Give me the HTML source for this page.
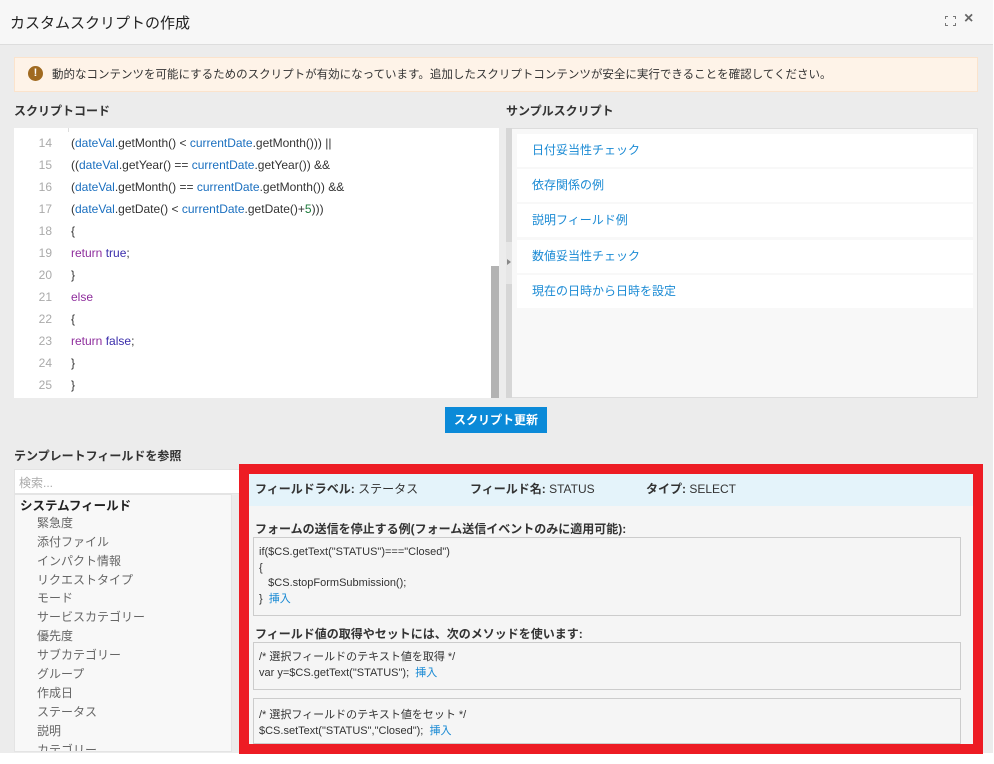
<!DOCTYPE html>
<html><head><meta charset="utf-8"><style>
*{box-sizing:border-box;margin:0;padding:0}
body{width:994px;height:764px;background:#fff;font-family:"Liberation Sans","Noto Sans CJK JP",sans-serif;position:relative;overflow:hidden;color:#333}
.a{position:absolute}
.hdr{left:0;top:0;width:993px;height:45px;background:#f7f7f7;border-bottom:1px solid #ddd}
.body{left:0;top:45px;width:993px;height:708px;background:#ececec}
.code div{position:absolute;left:0;font-size:12px;height:22px;line-height:22px;white-space:pre;color:#333}
.code .ln{color:#aaa;width:38px;text-align:right}
.b{color:#1a6fbf}.k{color:#8e2d9c}.t{color:#3a2dab}.n{color:#1b7a3a}
.item{position:absolute;left:517px;width:456px;height:33px;background:#fff;color:#1a8ad4;font-size:12px;line-height:33px;padding-left:15px}
.fld{position:absolute;left:36px;font-size:12px;color:#666}
.box{position:absolute;left:253px;width:708px;background:#f5f5f5;border:1px solid #ccc;font-size:11px;color:#333;line-height:15.5px;padding:7px 0 0 5px}
.ins{color:#1a8ad4}
.br{position:absolute;width:3px;height:3px;border-color:#777;border-style:solid;border-width:0}
</style></head><body>
<div class="a hdr"></div>
<div class="a" style="left:10px;top:12px;font-size:15px;color:#222">カスタムスクリプトの作成</div>
<div class="br" style="left:945px;top:16px;border-left-width:1.5px;border-top-width:1.5px"></div>
<div class="br" style="left:953px;top:16px;border-right-width:1.5px;border-top-width:1.5px"></div>
<div class="br" style="left:945px;top:23px;border-left-width:1.5px;border-bottom-width:1.5px"></div>
<div class="br" style="left:953px;top:23px;border-right-width:1.5px;border-bottom-width:1.5px"></div>
<div class="a" style="left:964px;top:10px;font-size:16px;color:#666;font-weight:bold">×</div>
<div class="a body"></div>
<div class="a" style="left:14px;top:57px;width:964px;height:35px;background:#fef3e8;border:1px solid #fbe3cc"></div>
<div class="a" style="left:28px;top:66px;width:15px;height:15px;border-radius:50%;background:#a06a20;color:#fff;font-size:11px;font-weight:bold;text-align:center;line-height:15px">!</div>
<div class="a" style="left:52px;top:66px;font-size:11.5px;color:#333">動的なコンテンツを可能にするためのスクリプトが有効になっています。追加したスクリプトコンテンツが安全に実行できることを確認してください。</div>
<div class="a" style="left:14px;top:102px;font-size:12px;font-weight:bold;color:#333">スクリプトコード</div>
<div class="a" style="left:506px;top:102px;font-size:12px;font-weight:bold;color:#333">サンプルスクリプト</div>
<div class="a code" style="left:14px;top:128px;width:485px;height:270px;background:#fff;overflow:hidden">
<div style="left:54px;top:0;width:1px;height:4px;background:#ddd"></div>
<div class="ln" style="top:4px">14</div><div style="left:57px;top:4px">(<span class="b">dateVal</span>.getMonth() &lt; <span class="b">currentDate</span>.getMonth())) ||</div>
<div class="ln" style="top:26px">15</div><div style="left:57px;top:26px">((<span class="b">dateVal</span>.getYear() == <span class="b">currentDate</span>.getYear()) &amp;&amp;</div>
<div class="ln" style="top:48px">16</div><div style="left:57px;top:48px">(<span class="b">dateVal</span>.getMonth() == <span class="b">currentDate</span>.getMonth()) &amp;&amp;</div>
<div class="ln" style="top:70px">17</div><div style="left:57px;top:70px">(<span class="b">dateVal</span>.getDate() &lt; <span class="b">currentDate</span>.getDate()+<span class="n">5</span>)))</div>
<div class="ln" style="top:92px">18</div><div style="left:57px;top:92px">{</div>
<div class="ln" style="top:114px">19</div><div style="left:57px;top:114px"><span class="k">return</span> <span class="t">true</span>;</div>
<div class="ln" style="top:136px">20</div><div style="left:57px;top:136px">}</div>
<div class="ln" style="top:158px">21</div><div style="left:57px;top:158px"><span class="k">else</span></div>
<div class="ln" style="top:180px">22</div><div style="left:57px;top:180px">{</div>
<div class="ln" style="top:202px">23</div><div style="left:57px;top:202px"><span class="k">return</span> <span class="t">false</span>;</div>
<div class="ln" style="top:224px">24</div><div style="left:57px;top:224px">}</div>
<div class="ln" style="top:246px">25</div><div style="left:57px;top:246px">}</div>
<div style="left:477px;top:138px;width:8px;height:132px;background:#b3b3b3"></div>
</div>
<div class="a" style="left:506px;top:128px;width:6px;height:270px;background:#d6d6d6"></div>
<div class="a" style="left:506px;top:242px;width:6px;height:42px;background:#e6e6e6"></div>
<div class="a" style="left:507px;top:259px;width:0;height:0;border-left:4px solid #888;border-top:3px solid transparent;border-bottom:3px solid transparent"></div>
<div class="a" style="left:512px;top:128px;width:466px;height:270px;background:#f8f8f8;border:1px solid #ddd;border-left:none"></div>
<div class="item" style="top:134px">日付妥当性チェック</div>
<div class="item" style="top:169px">依存関係の例</div>
<div class="item" style="top:204px">説明フィールド例</div>
<div class="item" style="top:240px">数値妥当性チェック</div>
<div class="item" style="top:275px">現在の日時から日時を設定</div>
<div class="a" style="left:445px;top:407px;width:102px;height:26px;background:#0b8ad8;color:#fff;font-size:12px;font-weight:bold;text-align:center;line-height:26px">スクリプト更新</div>
<div class="a" style="left:14px;top:447px;font-size:12px;font-weight:bold;color:#333">テンプレートフィールドを参照</div>
<div class="a" style="left:14px;top:469px;width:226px;height:25px;background:#fff;border:1px solid #e4e4e4;font-size:12px;color:#aaa;padding:4px 0 0 4px">検索...</div>
<div class="a" style="left:14px;top:494px;width:218px;height:258px;background:#f8f8f8;border:1px solid #e4e4e4;overflow:hidden">
<div class="a" style="left:5px;top:0;font-size:12.5px;font-weight:bold;color:#222">システムフィールド</div>
<div class="fld" style="left:22px;top:19px">緊急度</div>
<div class="fld" style="left:22px;top:38px">添付ファイル</div>
<div class="fld" style="left:22px;top:57px">インパクト情報</div>
<div class="fld" style="left:22px;top:76px">リクエストタイプ</div>
<div class="fld" style="left:22px;top:94px">モード</div>
<div class="fld" style="left:22px;top:113px">サービスカテゴリー</div>
<div class="fld" style="left:22px;top:132px">優先度</div>
<div class="fld" style="left:22px;top:151px">サブカテゴリー</div>
<div class="fld" style="left:22px;top:170px">グループ</div>
<div class="fld" style="left:22px;top:189px">作成日</div>
<div class="fld" style="left:22px;top:208px">ステータス</div>
<div class="fld" style="left:22px;top:227px">説明</div>
<div class="fld" style="left:22px;top:246px">カテゴリー</div>
</div>
<div class="a" style="left:239px;top:464px;width:744px;height:290px;background:#ed1c24"></div>
<div class="a" style="left:249px;top:474px;width:724px;height:270px;background:#f5f5f5"></div>
<div class="a" style="left:249px;top:474px;width:724px;height:32px;background:#e4f3fa;font-size:12px;line-height:30px;color:#333">
<span class="a" style="left:6px"><b>フィールドラベル:</b> ステータス</span>
<span class="a" style="left:221px"><b>フィールド名:</b> STATUS</span>
<span class="a" style="left:397px"><b>タイプ:</b> SELECT</span></div>
<div class="a" style="left:255px;top:520px;font-size:12px;font-weight:bold;color:#333">フォームの送信を停止する例(フォーム送信イベントのみに適用可能):</div>
<div class="box" style="top:537px;height:79px">if($CS.getText("STATUS")==="Closed")<br>{<br>&nbsp;&nbsp;&nbsp;$CS.stopFormSubmission();<br>}&nbsp; <span class="ins">挿入</span></div>
<div class="a" style="left:255px;top:625px;font-size:12px;font-weight:bold;color:#333">フィールド値の取得やセットには、次のメソッドを使います:</div>
<div class="box" style="top:642px;height:48px">/* 選択フィールドのテキスト値を取得 */<br>var y=$CS.getText("STATUS");&nbsp; <span class="ins">挿入</span></div>
<div class="box" style="top:698px;height:46px;padding-top:9px">/* 選択フィールドのテキスト値をセット */<br>$CS.setText("STATUS","Closed");&nbsp; <span class="ins">挿入</span></div>
</body></html>
